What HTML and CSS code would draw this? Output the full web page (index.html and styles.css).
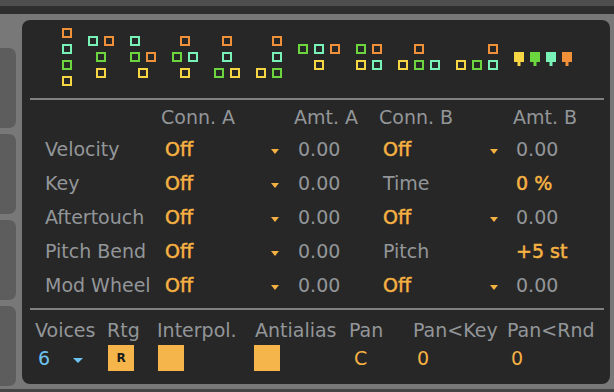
FILE: index.html
```html
<!DOCTYPE html>
<html>
<head>
<meta charset="utf-8">
<link rel="stylesheet" href="styles.css">
</head>
<body>
<div class="app">
  <div class="topbar"></div>
  <div class="topbar2"></div>
  <div class="main">
    <div class="tabs">
      <div class="tab"></div>
      <div class="tab"></div>
      <div class="tab"></div>
      <div class="tab"></div>
    </div>
    <div class="panel">
      <svg class="pattern" width="588" height="78" viewBox="22 20 588 78">
        <g fill="none" stroke-width="2">
          <rect x="63" y="29" width="8" height="8" stroke="#f0913a"/>
          <rect x="63" y="45" width="8" height="8" stroke="#78f2b6"/>
          <rect x="63" y="61" width="8" height="8" stroke="#6bd63e"/>
          <rect x="63" y="77" width="8" height="8" stroke="#f7d645"/>

          <rect x="89" y="37" width="8" height="8" stroke="#78f2b6"/>
          <rect x="105" y="37" width="8" height="8" stroke="#f0913a"/>
          <rect x="97" y="53" width="8" height="8" stroke="#6bd63e"/>
          <rect x="97" y="69" width="8" height="8" stroke="#f7d645"/>

          <rect x="131" y="37" width="8" height="8" stroke="#78f2b6"/>
          <rect x="131" y="53" width="8" height="8" stroke="#6bd63e"/>
          <rect x="147" y="53" width="8" height="8" stroke="#f0913a"/>
          <rect x="139" y="69" width="8" height="8" stroke="#f7d645"/>

          <rect x="181" y="37" width="8" height="8" stroke="#f0913a"/>
          <rect x="173" y="53" width="8" height="8" stroke="#6bd63e"/>
          <rect x="189" y="53" width="8" height="8" stroke="#78f2b6"/>
          <rect x="181" y="69" width="8" height="8" stroke="#f7d645"/>

          <rect x="223" y="37" width="8" height="8" stroke="#f0913a"/>
          <rect x="223" y="53" width="8" height="8" stroke="#78f2b6"/>
          <rect x="215" y="69" width="8" height="8" stroke="#6bd63e"/>
          <rect x="231" y="69" width="8" height="8" stroke="#f7d645"/>

          <rect x="273" y="37" width="8" height="8" stroke="#f0913a"/>
          <rect x="273" y="53" width="8" height="8" stroke="#78f2b6"/>
          <rect x="273" y="69" width="8" height="8" stroke="#6bd63e"/>
          <rect x="257" y="69" width="8" height="8" stroke="#f7d645"/>

          <rect x="299" y="45" width="8" height="8" stroke="#6bd63e"/>
          <rect x="315" y="45" width="8" height="8" stroke="#78f2b6"/>
          <rect x="331" y="45" width="8" height="8" stroke="#f0913a"/>
          <rect x="315" y="61" width="8" height="8" stroke="#f7d645"/>

          <rect x="357" y="45" width="8" height="8" stroke="#6bd63e"/>
          <rect x="373" y="45" width="8" height="8" stroke="#f0913a"/>
          <rect x="357" y="61" width="8" height="8" stroke="#f7d645"/>
          <rect x="373" y="61" width="8" height="8" stroke="#78f2b6"/>

          <rect x="415" y="45" width="8" height="8" stroke="#f0913a"/>
          <rect x="399" y="61" width="8" height="8" stroke="#f7d645"/>
          <rect x="415" y="61" width="8" height="8" stroke="#6bd63e"/>
          <rect x="431" y="61" width="8" height="8" stroke="#78f2b6"/>

          <rect x="489" y="45" width="8" height="8" stroke="#f0913a"/>
          <rect x="457" y="61" width="8" height="8" stroke="#f7d645"/>
          <rect x="473" y="61" width="8" height="8" stroke="#6bd63e"/>
          <rect x="489" y="61" width="8" height="8" stroke="#78f2b6"/>
        </g>
        <g>
          <rect x="514" y="52" width="10" height="10" fill="#f7d645"/>
          <rect x="517.5" y="62" width="3" height="4" fill="#f7d645"/>
          <rect x="530" y="52" width="10" height="10" fill="#6bd63e"/>
          <rect x="533.5" y="62" width="3" height="4" fill="#6bd63e"/>
          <rect x="546" y="52" width="10" height="10" fill="#78f2b6"/>
          <rect x="549.5" y="62" width="3" height="4" fill="#78f2b6"/>
          <rect x="562" y="52" width="10" height="10" fill="#f0913a"/>
          <rect x="565.5" y="62" width="3" height="4" fill="#f0913a"/>
        </g>
      </svg>

      <div class="divider"></div>

      <div class="table">
        <div class="hd"></div>
        <div class="hd">Conn. A</div>
        <div class="hd">Amt. A</div>
        <div class="hd">Conn. B</div>
        <div class="hd">Amt. B</div>

        <div class="lbl">Velocity</div>
        <div class="conn"><span class="sel">Off</span><span class="arrow"></span></div>
        <div class="amt">0.00</div>
        <div class="conn"><span class="sel">Off</span><span class="arrow"></span></div>
        <div class="amt amt-b">0.00</div>

        <div class="lbl">Key</div>
        <div class="conn"><span class="sel">Off</span><span class="arrow"></span></div>
        <div class="amt">0.00</div>
        <div class="conn"><span class="plain">Time</span></div>
        <div class="amt amt-b hot">0 %</div>

        <div class="lbl">Aftertouch</div>
        <div class="conn"><span class="sel">Off</span><span class="arrow"></span></div>
        <div class="amt">0.00</div>
        <div class="conn"><span class="sel">Off</span><span class="arrow"></span></div>
        <div class="amt amt-b">0.00</div>

        <div class="lbl">Pitch Bend</div>
        <div class="conn"><span class="sel">Off</span><span class="arrow"></span></div>
        <div class="amt">0.00</div>
        <div class="conn"><span class="plain">Pitch</span></div>
        <div class="amt amt-b hot">+5 st</div>

        <div class="lbl">Mod Wheel</div>
        <div class="conn"><span class="sel">Off</span><span class="arrow"></span></div>
        <div class="amt">0.00</div>
        <div class="conn"><span class="sel">Off</span><span class="arrow"></span></div>
        <div class="amt amt-b">0.00</div>
      </div>

      <div class="divider divider-low"></div>

      <div class="bottom">
        <div class="blbl">Voices</div>
        <div class="blbl">Rtg</div>
        <div class="blbl">Interpol.</div>
        <div class="blbl">Antialias</div>
        <div class="blbl">Pan</div>
        <div class="blbl">Pan&lt;Key</div>
        <div class="blbl">Pan&lt;Rnd</div>

        <div class="bval voices"><span class="blue">6</span><span class="arrow arrow-blue"></span></div>
        <div class="bval"><span class="box box-r">R</span></div>
        <div class="bval"><span class="box"></span></div>
        <div class="bval"><span class="box box-shift"></span></div>
        <div class="bval num pan">C</div>
        <div class="bval num">0</div>
        <div class="bval num">0</div>
      </div>
    </div>
  </div>
  <div class="bottombar"></div>
</div>
</body>
</html>
```

FILE: styles.css
```css
html, body {
  margin: 0;
  padding: 0;
  background: #787878;
  font-family: "DejaVu Sans", sans-serif;
  font-size: 19px;
  color: #939699;
}

.app {
  width: 614px;
  height: 392px;
  display: flex;
  flex-direction: column;
  overflow: hidden;
}

.topbar {
  height: 6px;
  background: #4e4e4e;
}

.topbar2 {
  height: 8px;
  background: #2e2e2e;
}

.main {
  height: 375px;
  display: flex;
  flex-direction: row;
  overflow: hidden;
}

.bottombar {
  height: 3px;
  background: #454545;
}

.tabs {
  width: 16px;
  margin-right: 6px;
  padding-top: 34px;
  display: flex;
  flex-direction: column;
  gap: 6px;
}

.tab {
  height: 80px;
  flex: none;
  background: #5d5d5d;
  border-radius: 0 7px 7px 0;
}

.panel {
  width: 588px;
  height: 364px;
  margin-top: 6px;
  background: #272727;
  border-radius: 8px;
  padding: 0 6px 0 8px;
  box-sizing: border-box;
  display: flex;
  flex-direction: column;
}

.pattern {
  display: block;
  width: 588px;
  height: 78px;
  margin-left: -8px;
  flex: none;
}

.divider {
  height: 2px;
  background: #808080;
  flex: none;
}

.divider-low {
  margin-top: 6px;
}

.table {
  display: grid;
  grid-template-columns: 116px 133px 85px 134px 1fr;
  grid-template-rows: 29px repeat(5, 34px);
  margin-left: 15px;
  padding-top: 3px;
}

.hd {
  line-height: 29px;
  white-space: nowrap;
}

.lbl, .amt, .conn {
  line-height: 34px;
  white-space: nowrap;
}

.conn {
  display: flex;
  align-items: center;
  justify-content: space-between;
  padding-left: 4px;
  padding-right: 15px;
}

.sel {
  color: #f6b143;
  -webkit-text-stroke: 0.5px #f6b143;
}

.plain {
  color: #939699;
}

.amt {
  padding-left: 4px;
}

.amt-b {
  padding-left: 3px;
}

.hot {
  color: #f6b143;
  -webkit-text-stroke: 0.5px #f6b143;
}

.arrow {
  width: 0;
  height: 0;
  border-left: 4.5px solid transparent;
  border-right: 4.5px solid transparent;
  border-top: 5px solid #f6b143;
  margin-top: 4px;
}

.arrow-blue {
  border-left: 5.5px solid transparent;
  border-right: 5.5px solid transparent;
  border-top: 5px solid #6ec3f0;
  margin-left: 23px;
}

.bottom {
  display: grid;
  grid-template-columns: 72px 50px 98px 94px 64px 94px 1fr;
  grid-template-rows: 28px 28px;
  margin-left: 5px;
  padding-top: 6px;
}

.blbl {
  line-height: 28px;
  white-space: nowrap;
}

.bval {
  display: flex;
  align-items: center;
  line-height: 28px;
}

.voices {
  padding-left: 3px;
}

.blue {
  color: #6ec3f0;
}

.box {
  width: 26px;
  height: 26px;
  background: #f6b54a;
  margin-left: 1px;
  display: flex;
  align-items: center;
  justify-content: center;
}

.box-shift {
  margin-left: -1px;
}

.box-r {
  color: #1c1c1c;
  font-size: 12px;
  font-weight: bold;
  line-height: 1;
}

.num {
  color: #f6b143;
  padding-left: 4px;
}

.pan {
  padding-left: 5px;
}
```
